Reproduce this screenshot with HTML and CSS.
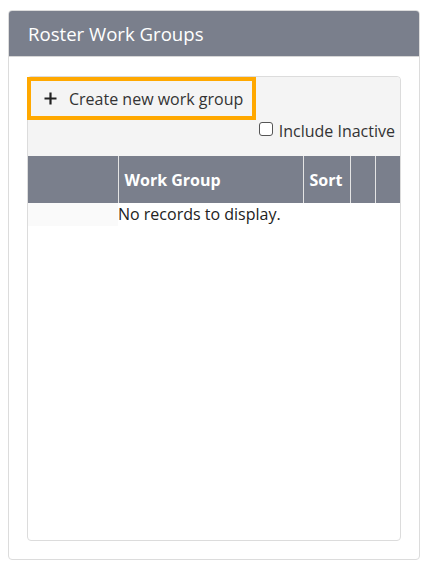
FILE: index.html
```html
<!DOCTYPE html>
<html>
<head>
<meta charset="utf-8">
<link rel="stylesheet" href="styles.css">
</head>
<body>
<div class="card">
  <div class="card-header">Roster Work Groups</div>
  <div class="card-body">
    <div class="grid">
      <div class="toolbar">
        <button class="create-btn" type="button">
          <svg class="plus" width="13" height="13" viewBox="0 0 13 13"><path d="M6.5 0.5v12M0.5 6.5h12" stroke="#222" stroke-width="2.2" fill="none"/></svg>
          <span>Create new work group</span>
        </button>
        <label class="inactive"><span class="box"></span>Include Inactive</label>
      </div>
      <table class="tbl">
        <colgroup>
          <col class="c-hier"><col class="c-name"><col class="c-sort"><col class="c-a"><col class="c-b">
        </colgroup>
        <thead>
          <tr><th></th><th>Work Group</th><th>Sort</th><th></th><th></th></tr>
        </thead>
        <tbody>
          <tr><td class="hier"></td><td colspan="4" class="norec">No records to display.</td></tr>
        </tbody>
      </table>
    </div>
  </div>
</div>
</body>
</html>
```

FILE: styles.css
```css
html, body {
  margin: 0;
  padding: 0;
  background: #fff;
}
body {
  font-family: "Open Sans", "Liberation Sans", sans-serif;
  color: #333;
  padding: 10px 8px 0 8px;
}
.card {
  width: 412px;
  height: 550px;
  border: 1px solid #dcdcdc;
  border-radius: 4px;
  display: flex;
  flex-direction: column;
  box-sizing: border-box;
  overflow: hidden;
}
.card-header {
  background: #7a7f8c;
  color: #fff;
  font-size: 18.6px;
  height: 45px;
  line-height: 45px;
  padding-left: 19px;
  border-bottom: 1px solid #d6d6d6;
  flex: none;
}
.card-body {
  flex: 1;
  padding: 19px 18px 18px 18px;
  display: flex;
}
.grid {
  flex: 1;
  border: 1px solid #dcdcdc;
  border-radius: 4px;
  display: flex;
  flex-direction: column;
}
.toolbar {
  background: #f4f4f4;
  height: 79px;
  display: flex;
  flex-direction: column;
  align-items: flex-start;
  border-radius: 4px 4px 0 0;
}
.create-btn {
  margin: 0 0 0 -1px;
  border: 4px solid #ffa800;
  background: #f4f4f4;
  height: 43px;
  width: 229px;
  box-sizing: border-box;
  padding: 0 0 0 13px;
  display: flex;
  align-items: center;
  gap: 12px;
  font-family: inherit;
  font-size: 16px;
  color: #333;
  cursor: pointer;
}
.plus { flex: none; }
.inactive {
  align-self: flex-end;
  display: flex;
  align-items: center;
  font-size: 16px;
  line-height: 20px;
  color: #333;
  margin-right: 5px;
  margin-top: 1px;
}
.box {
  width: 12px;
  height: 12px;
  border: 1px solid #555;
  border-radius: 3px;
  background: #fff;
  margin-right: 6px;
  margin-top: -4px;
}
.tbl {
  width: 100%;
  border-collapse: collapse;
  table-layout: fixed;
}
.c-hier { width: 90px; }
.c-name { width: 185px; }
.c-sort { width: 47px; }
.c-a { width: 25px; }
.c-b { width: auto; }
.tbl th {
  background: #7a7f8c;
  color: #fff;
  font-weight: 700;
  font-size: 16px;
  text-align: left;
  height: 47px;
  padding: 0 0 0 6px;
  border-left: 1px solid #e4e4e4;
  box-sizing: border-box;
}
.tbl th:first-child { border-left: none; }
.tbl td {
  padding: 0;
  height: 23px;
  font-size: 16px;
  line-height: 23px;
  color: #222;
}
.tbl td.hier { background: #fafafa; }
.tbl td.norec { padding-left: 0; }
```
